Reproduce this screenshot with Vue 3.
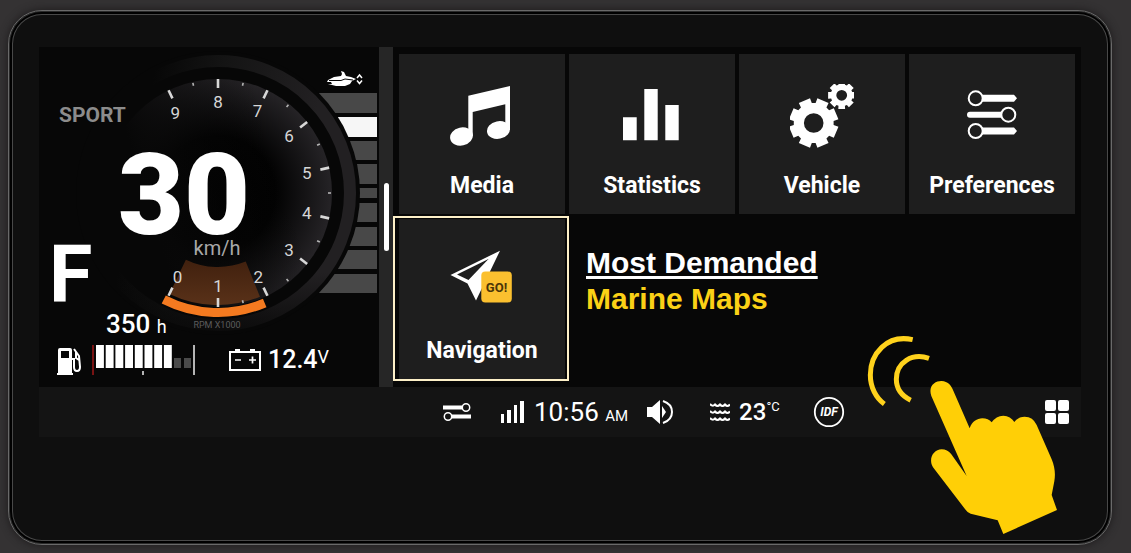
<script setup>
const CX = 179
const CY = 146

function polar(radius, degrees) {
  const a = (degrees * Math.PI) / 180
  return { x: CX + radius * Math.sin(a), y: CY - radius * Math.cos(a) }
}

const STEP = 180 / 7

const marks = [9, 8, 7, 6, 5, 4, 3, 2, 1, 0].map((value, i) => {
  const angle = (i - 1) * STEP
  const label = polar(value < 3 ? 93 : 91, value === 9 ? -28 : angle)
  const a = polar(105, angle)
  const b = polar(114, angle)
  return { value, label, a, b }
})

const minorMarks = [...Array(9).keys()].filter((i) => i !== 8).map((i) => {
  const angle = (i - 0.5) * STEP
  return { a: polar(110, angle), b: polar(113, angle) }
})

function sector(inner, outer, from, to) {
  const p1 = polar(inner, from)
  const p2 = polar(inner, to)
  const p3 = polar(outer, to)
  const p4 = polar(outer, from)
  return `M${p1.x} ${p1.y}A${inner} ${inner} 0 0 1 ${p2.x} ${p2.y}L${p3.x} ${p3.y}A${outer} ${outer} 0 0 0 ${p4.x} ${p4.y}Z`
}

const powerBand = sector(74, 112, 158, 180 + STEP)
const powerArc = sector(115, 124, 157, 207)

const trimBars = [
  { y: 46, h: 20 },
  { y: 70, h: 20, on: true },
  { y: 94, h: 19 },
  { y: 117, h: 20 },
  { y: 141, h: 10 },
  { y: 156, h: 19 },
  { y: 180, h: 19 },
  { y: 203, h: 19 },
  { y: 227, h: 19 }
]

function gear(cx, cy, outer, root, hole, offset) {
  const points = []
  for (let i = 0; i < 8; i++) {
    const mid = offset + i * 45
    for (const [r, d] of [[root, -17], [outer, -14], [outer, 14], [root, 17]]) {
      const a = ((mid + d) * Math.PI) / 180
      points.push(`${cx + r * Math.sin(a)} ${cy - r * Math.cos(a)}`)
    }
  }
  return `M${points.join('L')}ZM${cx - hole} ${cy}a${hole} ${hole} 0 1 0 ${hole * 2} 0a${hole} ${hole} 0 1 0 ${-hole * 2} 0Z`
}

const bigGear = gear(23.7, 39, 25, 20, 9.8, 22.5)
const smallGear = gear(51.7, 11.3, 14, 11, 5.4, 0)

const waveRows = [2, 9, 16]

const tiles = [
  { id: 'media', label: 'Media' },
  { id: 'stats', label: 'Statistics' },
  { id: 'vehicle', label: 'Vehicle' },
  { id: 'prefs', label: 'Preferences' },
  { id: 'nav', label: 'Navigation', focused: true }
]
</script>

<template>
  <main class="device">
    <div class="screen">
      <section class="cluster" aria-label="Instrument cluster">
        <svg class="dial" viewBox="0 0 340 340">
          <defs>
            <radialGradient id="face" cx="179" cy="146" r="114" gradientUnits="userSpaceOnUse">
              <stop offset="0" stop-color="#000" />
              <stop offset="0.5" stop-color="#020202" />
              <stop offset="1" stop-color="#252326" />
            </radialGradient>
            <linearGradient id="fade" x1="110" y1="160" x2="240" y2="120" gradientUnits="userSpaceOnUse">
              <stop offset="0" stop-color="#070707" />
              <stop offset="1" stop-color="#070707" stop-opacity="0" />
            </linearGradient>
            <linearGradient id="bezel" x1="105" y1="80" x2="270" y2="110" gradientUnits="userSpaceOnUse">
              <stop offset="0" stop-color="#070707" />
              <stop offset="0.4" stop-color="#141414" />
              <stop offset="1" stop-color="#222022" />
            </linearGradient>
            <linearGradient id="low" x1="0" y1="225" x2="0" y2="290" gradientUnits="userSpaceOnUse">
              <stop offset="0" stop-color="#070707" stop-opacity="0" />
              <stop offset="1" stop-color="#070707" stop-opacity="0.85" />
            </linearGradient>
            <linearGradient id="band" x1="0" y1="212" x2="0" y2="260" gradientUnits="userSpaceOnUse">
              <stop offset="0" stop-color="#40200e" />
              <stop offset="1" stop-color="#5a3219" />
            </linearGradient>
          </defs>

          <rect
            v-for="bar in trimBars"
            :key="bar.y"
            x="262"
            :y="bar.y"
            width="76"
            :height="bar.h"
            :fill="bar.on ? '#f6f6f6' : '#484848'"
          />
          <circle cx="179" cy="146" r="142" fill="#070707" />
          <circle cx="179" cy="146" r="132" fill="none" stroke="url(#bezel)" stroke-width="12" />
          <circle cx="179" cy="146" r="132" fill="none" stroke="url(#low)" stroke-width="14" />
          <circle cx="179" cy="146" r="114" fill="url(#face)" />
          <circle cx="179" cy="146" r="115" fill="url(#fade)" />

          <path :d="powerBand" fill="url(#band)" />
          <path :d="powerArc" fill="#f47a20" />

          <line v-for="(m, i) in minorMarks" :key="'n' + i" :x1="m.a.x" :y1="m.a.y" :x2="m.b.x" :y2="m.b.y" stroke="#b5b5b5" stroke-width="1.6" />
          <g v-for="m in marks" :key="m.value">
            <line :x1="m.a.x" :y1="m.a.y" :x2="m.b.x" :y2="m.b.y" stroke="#d8d8d8" stroke-width="2.6" />
            <text :x="m.label.x" :y="m.label.y + 6" class="mark">{{ m.value }}</text>
          </g>

          <path d="M289 33l6-3 7-1 1-2-1-3 3 1 2 4 5 1 5 2-4 2-2 3-5 2h-9l-8-2h4l-1-2h-4z" fill="#fff" />
          <path d="M290 33.500l12 0 4-1.500 8 1" fill="none" stroke="#070707" stroke-width="1" />
          <path d="M318 31l2.500-3 2.500 3M318 33.500l2.500 3 2.500-3" fill="none" stroke="#fff" stroke-width="1.500" />

          <text x="20" y="75" class="mode">SPORT</text>
          <text x="145" y="187" class="speed">30</text>
          <text x="178" y="208" class="unit">km/h</text>
          <text x="10" y="254" class="gear">F</text>
          <text x="178" y="281" class="scale">RPM X1000</text>
        </svg>

        <div class="readouts">
          <svg class="fuel-icon" viewBox="0 0 25 28" aria-label="Fuel">
            <path d="M0 28V26h1V3a2 2 0 0 1 2-2h10a2 2 0 0 1 2 2v23h1v2zM4 4v7h8V4z" fill="#fff" fill-rule="evenodd" />
            <path d="M15 12h2v8q0 4 3 4t3-4l-1-11-5-7M19 5v6l3 2" fill="none" stroke="#fff" stroke-width="2" />
          </svg>
          <div class="fuel">
            <p class="hours">350 <small>h</small></p>
            <svg class="fuel-bars" viewBox="0 0 103 30" role="img" aria-label="Fuel level">
              <path d="M1 0v30" stroke="#a01818" stroke-width="1.500" />
              <rect v-for="n in 8" :key="n" :x="4 + (n - 1) * 9.7" y="0" width="7.900" height="23" fill="#fff" />
              <path d="M82 13h7v10h-7zM92 13h7v10h-7z" fill="#4a4a4a" />
              <path d="M102 0v30M51 26v4" stroke="#eee" stroke-width="1.500" />
            </svg>
          </div>
          <div class="battery">
            <svg class="battery-icon" viewBox="0 0 32 22" aria-label="Battery">
              <path d="M1 3h30v18H1zM6 1h5M21 1h5" fill="none" stroke="#fff" stroke-width="2" />
              <path d="M6 11h6M20 11h7M23.500 7.500v7" stroke="#fff" stroke-width="1.700" />
            </svg>
            <span class="volts">12.4<small>V</small></span>
          </div>
        </div>
      </section>

      <div class="divider"><span class="handle"></span></div>

      <nav class="menu" aria-label="Apps">
        <button v-for="tile in tiles" :key="tile.id" type="button" class="tile" :class="{ focused: tile.focused }">
          <svg class="tile-icon" viewBox="0 0 64 64" aria-hidden="true" fill="#fff">
            <template v-if="tile.id === 'media'">
              <path d="M18.300 11.700L60 2V46H55.300V20.300L22.700 28V52H18.300z" />
              <ellipse cx="11.500" cy="52.500" rx="11.500" ry="9" transform="rotate(-12 11.500 52.500)" />
              <ellipse cx="48.500" cy="46" rx="11.600" ry="8.800" transform="rotate(-12 48.500 46)" />
            </template>
            <path v-else-if="tile.id === 'stats'" d="M3 33.300h13.700v23H3zM24.300 5h13.400v51.300H24.300zM45.300 21h13.400v35.300H45.300z" />
            <template v-else-if="tile.id === 'vehicle'">
              <path :d="bigGear" fill-rule="evenodd" />
              <path :d="smallGear" fill-rule="evenodd" />
            </template>
            <template v-else-if="tile.id === 'prefs'">
              <path d="M22 10.800h32l3 3.500-3 3.500H22zM42 27.700H10q-3 0-3 3t3 3h32zM22 43.500h32l3 3.500-3 3.500H22z" />
              <g fill="#1e1e1e" stroke="#fff" stroke-width="2">
                <circle cx="15.700" cy="14.300" r="7" />
                <circle cx="48.300" cy="30.700" r="7" />
                <circle cx="15.700" cy="47" r="7" />
              </g>
            </template>
            <template v-else>
              <path d="M50 1.700L26 51.500 17.500 34.500 0.500 26zM38.500 10L7 25.500 18.500 31z" fill-rule="evenodd" />
              <rect x="31.300" y="22.500" width="30.500" height="31" rx="4" fill="#fbc02f" />
              <text x="46.500" y="43" class="go">GO!</text>
            </template>
          </svg>
          <span>{{ tile.label }}</span>
        </button>
        <div class="promo">
          <strong>Most Demanded</strong>
          <em>Marine Maps</em>
        </div>
      </nav>

      <footer class="status">
        <svg class="s-sliders" viewBox="0 0 28 18" aria-hidden="true">
          <path d="M0 4.500h20M8 13.500h20" stroke="#fff" stroke-width="4" />
          <g fill="#141414" stroke="#fff" stroke-width="1.500">
            <circle cx="23" cy="4.500" r="3.700" />
            <circle cx="5" cy="13.500" r="3.700" />
          </g>
        </svg>
        <svg class="s-signal" viewBox="0 0 24 22" aria-label="Signal">
          <path d="M0 13h3v9H0zM6 9h4v13H6zM13 4h3v18h-3zM19 0h4v22h-4z" fill="#fff" />
        </svg>
        <time class="time">10:56 <small>AM</small></time>
        <svg class="s-sound" viewBox="0 0 28 26" aria-label="Volume">
          <path d="M1 8h5l8-7v24l-8-7H1z" fill="#fff" />
          <path d="M16 7l4 6-4 6z" fill="#fff" />
          <path d="M17 2q9 3 9 11t-9 11" fill="none" stroke="#fff" stroke-width="2" />
        </svg>
        <svg class="s-water" viewBox="0 0 20 20" aria-label="Water temperature">
          <path
            v-for="y in waveRows"
            :key="y"
            :d="`M0 ${y}q2.500 3 5 0.500q2.500 3 5 0q2.500 3 5 0q2.500 3 5 0`"
            fill="none"
            stroke="#fff"
            stroke-width="2"
          />
        </svg>
        <span class="temp">23<small>°C</small></span>
        <svg class="s-idf" viewBox="0 0 32 32">
          <circle cx="16" cy="16" r="14.200" fill="none" stroke="#fff" stroke-width="1.800" />
          <text x="16" y="20" class="idf">IDF</text>
        </svg>
        <button class="apps" type="button" aria-label="All apps">
          <i></i><i></i><i></i><i></i>
        </button>
      </footer>
    </div>

    <svg class="hand" viewBox="48 45 576 600" aria-hidden="true">
      <g fill="none" stroke="#ffd21c" stroke-width="15">
        <path d="M188 59C110 42 61 102 61 165C61 202 78 234 103 252" />
        <path d="M237 115C186 98 139 127 139 178C139 206 156 228 182 241" />
      </g>
      <path
        d="M244 228C233 196 258 182 275 183C294 184 303 196 308 208L359 325C366 303 381 296 397 295Q415 295 425 307Q438 288 460 287Q482 288 493 306Q505 290 524 290Q549 290 560 315L605 418C614 440 617 460 613 484L605 525L621 570L460 642L443 601L362 581Q353 579 348 571L249 442C234 416 250 389 275 388Q292 388 304 403L350 468z"
        fill="#ffcf06"
      />
    </svg>
  </main>
</template>

<style>
body {
  margin: 0;
  background: #343233;
}
</style>

<style scoped>
.device {
  position: relative;
  box-sizing: border-box;
  margin: 10px 19px 8px 8px;
  padding: 36px 30px 107px;
  border: 1px solid #6a6a6a;
  border-radius: 34px;
  background: #0f0f0f;
  box-shadow: inset 0 0 0 1px #2a2a2a, inset 0 0 0 3px #000, inset 0 0 0 4px #484848, 0 0 8px #1c1a1b;
  color: #fff;
  font-family: Roboto, "Liberation Sans", sans-serif;
}

.screen {
  display: grid;
  grid-template-columns: 340px 14px minmax(0, 1fr);
  background: #070707;
}

.cluster {
  display: grid;
}

.dial,
.readouts {
  grid-area: 1 / 1;
}

.dial {
  display: block;
  width: 340px;
  height: 340px;
}

.dial text {
  fill: #fff;
}

.dial .mark {
  font-size: 17px;
  text-anchor: middle;
  fill: #d6d6d6;
}

.dial .mode {
  font-size: 21px;
  font-weight: 700;
  fill: #8c8c8c;
}

.dial .speed {
  font-size: 114px;
  font-weight: 900;
  text-anchor: middle;
}

.dial .unit {
  font-size: 20px;
  text-anchor: middle;
  fill: #a8a8a8;
}

.dial .gear {
  font-size: 79px;
  font-weight: 700;
}

.dial .scale {
  font-size: 9px;
  text-anchor: middle;
  fill: #5c5c5c;
}

.readouts {
  align-self: end;
  display: flex;
  align-items: flex-end;
  padding: 0 0 12px 18px;
}

.fuel-icon {
  width: 25px;
  height: 28px;
}

.fuel {
  margin-left: 10px;
}

.fuel-bars {
  display: block;
  width: 103px;
  height: 30px;
}

.hours {
  margin: 0 0 4px 14px;
  font-size: 26px;
  line-height: 28px;
  font-weight: 500;
}

.hours small {
  font-size: 18px;
  font-weight: 400;
}

.battery {
  display: flex;
  align-items: center;
  gap: 7px;
  margin-left: 34px;
}

.battery-icon {
  width: 32px;
  height: 22px;
}

.volts {
  display: flex;
  font-size: 25px;
  line-height: 30px;
  font-weight: 500;
}

.volts small {
  font-size: 18px;
  line-height: 24px;
  font-weight: 400;
}

.divider {
  display: flex;
  align-items: center;
  justify-content: center;
  background: #262626;
}

.handle {
  width: 5px;
  height: 68px;
  border-radius: 3px;
  background: #fff;
}

.menu {
  display: grid;
  grid-template-columns: repeat(4, minmax(0, 1fr));
  gap: 5px 4px;
  align-content: start;
  padding: 7px 6px 8px;
}

.tile {
  position: relative;
  display: flex;
  flex-direction: column;
  align-items: center;
  gap: 24px;
  padding: 30px 0 14px;
  border: 0;
  background: #1e1e1e;
  color: #fff;
  font: 700 23px/28px Roboto, "Liberation Sans", sans-serif;
}

.tile.focused::after {
  content: "";
  position: absolute;
  inset: -3px -4px -2px -6px;
  border: 2px solid #fdf0c8;
}

.tile-icon {
  width: 64px;
  height: 64px;
}

.go {
  font-size: 13px;
  font-weight: 700;
  text-anchor: middle;
  fill: #4a3508;
}

.promo {
  grid-column: span 3;
  padding: 26px 0 0 17px;
  font: 700 30px/36px "Liberation Sans", Arial, sans-serif;
}

.promo strong,
.promo em {
  display: block;
  font-style: normal;
}

.promo strong {
  text-decoration: underline;
  text-decoration-thickness: 3px;
  text-underline-offset: 3px;
  text-decoration-skip-ink: none;
}

.promo em {
  color: #fbd116;
}

.status {
  grid-column: 1 / -1;
  display: flex;
  align-items: center;
  height: 50px;
  padding: 0 12px 0 404px;
  background: #141414;
}

.s-sliders {
  width: 28px;
  height: 18px;
}

.s-signal {
  width: 24px;
  height: 22px;
  margin-left: 30px;
}

.time {
  margin-left: 9px;
  font-size: 26px;
  white-space: nowrap;
}

.time small {
  font-size: 15px;
}

.s-sound {
  width: 28px;
  height: 26px;
  margin-left: 18px;
}

.s-water {
  width: 20px;
  height: 20px;
  margin-left: 36px;
}

.temp {
  display: flex;
  margin-left: 9px;
  font-size: 24px;
  line-height: 28px;
  font-weight: 500;
}

.temp small {
  font-size: 13px;
  line-height: 18px;
  font-weight: 400;
}

.s-idf {
  width: 32px;
  height: 32px;
  margin-left: 33px;
}

.idf {
  font-size: 12px;
  font-weight: 700;
  font-style: italic;
  text-anchor: middle;
  fill: #fff;
}

.apps {
  display: grid;
  grid-template-columns: 11px 11px;
  gap: 2px;
  margin-left: auto;
  padding: 0;
  border: 0;
  background: none;
}

.apps i {
  height: 11px;
  border-radius: 2px;
  background: #fff;
}

.hand {
  position: absolute;
  right: 53px;
  bottom: 9px;
  width: 192px;
  height: 200px;
  pointer-events: none;
}
</style>
